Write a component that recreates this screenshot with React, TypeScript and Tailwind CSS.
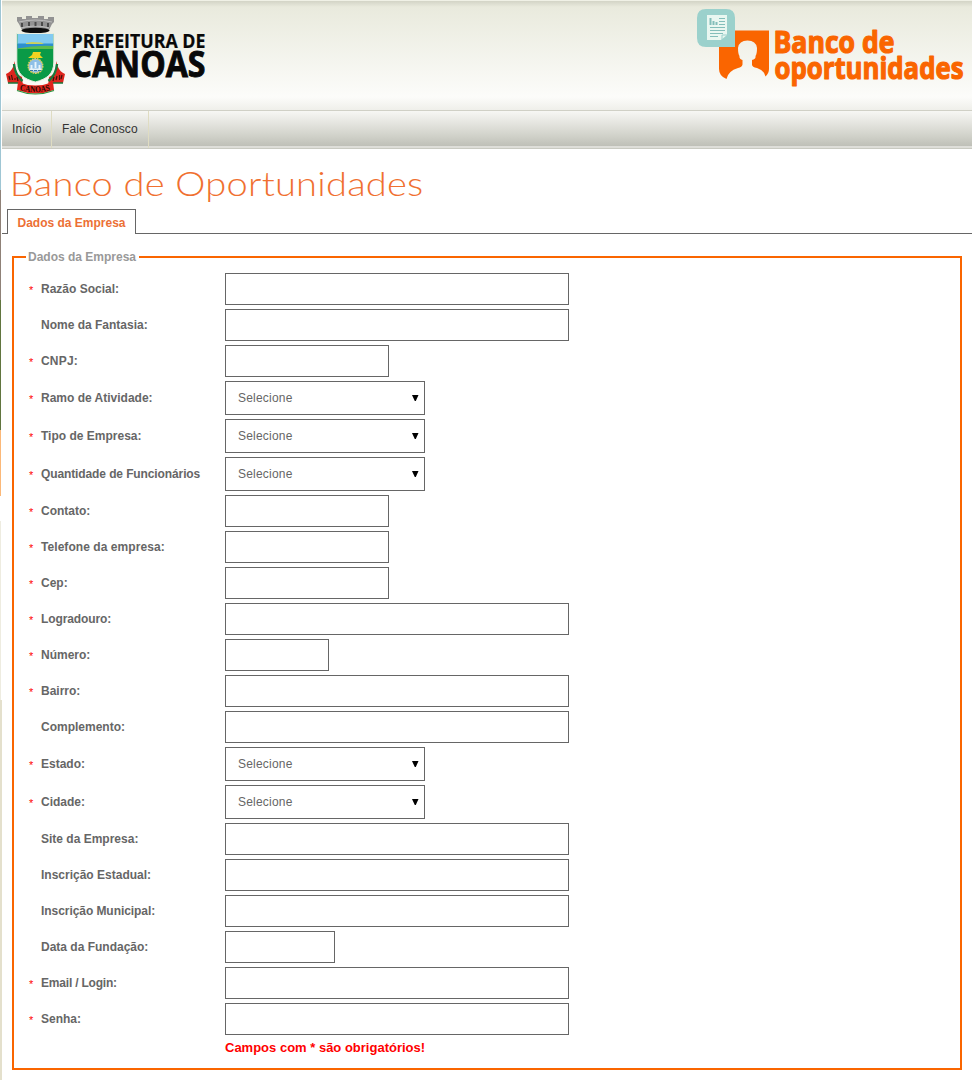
import React from "react";

type Row = {
  label: string;
  required?: boolean;
  kind?: "select";
  width: string;
  tracking?: string;
};

const rows: Row[] = [
  { label: "Razão Social:", required: true, width: "w-[344px]" },
  { label: "Nome da Fantasia:", width: "w-[344px]" },
  { label: "CNPJ:", required: true, width: "w-[164px]", tracking: "tracking-[0.2px]" },
  { label: "Ramo de Atividade:", required: true, kind: "select", width: "w-[200px]" },
  { label: "Tipo de Empresa:", required: true, kind: "select", width: "w-[200px]" },
  { label: "Quantidade de Funcionários", required: true, kind: "select", width: "w-[200px]", tracking: "tracking-[-0.11px]" },
  { label: "Contato:", required: true, width: "w-[164px]" },
  { label: "Telefone da empresa:", required: true, width: "w-[164px]", tracking: "tracking-[0.06px]" },
  { label: "Cep:", required: true, width: "w-[164px]" },
  { label: "Logradouro:", required: true, width: "w-[344px]", tracking: "tracking-[-0.1px]" },
  { label: "Número:", required: true, width: "w-[104px]" },
  { label: "Bairro:", required: true, width: "w-[344px]" },
  { label: "Complemento:", width: "w-[344px]" },
  { label: "Estado:", required: true, kind: "select", width: "w-[200px]" },
  { label: "Cidade:", required: true, kind: "select", width: "w-[200px]" },
  { label: "Site da Empresa:", width: "w-[344px]" },
  { label: "Inscrição Estadual:", width: "w-[344px]" },
  { label: "Inscrição Municipal:", width: "w-[344px]", tracking: "tracking-[-0.06px]" },
  { label: "Data da Fundação:", width: "w-[110px]" },
  { label: "Email / Login:", required: true, width: "w-[344px]", tracking: "tracking-[-0.2px]" },
  { label: "Senha:", required: true, width: "w-[344px]" },
];

function Crest() {
  return (
    <svg width="66" height="86" viewBox="2 12 66 86" className="block shrink-0">
      <path d="M17 17h5v2h4v-3h6v2h6v-2h6v3h4v-2h6v5l-2 2-3 6q-13-4-27 0l-3-6-2-3z" fill="#929292" />
      <path d="M19 22q16-4 33 0M21 28q14-4 28 0" stroke="#bcbcbc" strokeWidth="1" fill="none" />
      <path d="M22 23v4M29 22v4M35.500 22v4M42 22v4M48 23v4" stroke="#4a4a4a" strokeWidth="2" />
      <ellipse cx="35.500" cy="30.500" rx="14" ry="2.800" fill="#0d0d0d" />
      <path d="M15 61l-2 6q-2 5-7 7l2 9 10 0 5 3-1-9-7-4z" fill="#dd261d" />
      <path d="M56 61l2 6q2 5 7 7l-2 9-10 0-5 3 1-9 7-4z" fill="#dd261d" />
      <path d="M14 64q1 11 8.500 17M57 64q-1 11-8.500 17" stroke="#177a3c" strokeWidth="2.400" fill="none" />
      <path d="M8 83l10 0 3 3M63 83l-10 0-3 3" stroke="#177a3c" strokeWidth="1.500" fill="none" />
      <path d="M16.800 33.500h37V62c0 12-7 17-18.500 20C24 79 16.800 74 16.800 62z" fill="#0a9a47" stroke="#e9eee0" strokeWidth="1" />
      <path d="M17.500 34h35.600v10H17.500z" fill="#82caf1" />
      <path d="M17.500 43.500h35.600V46l-17 1-18.600 2z" fill="#2d8fd0" />
      <path d="M17.500 48.500q18-3.500 35.600-2.500v3H17.500z" fill="#5dbb4d" />
      <path d="M26 44v-1l6-1 9 .500 3 1.500z" fill="#cdd15a" />
      <path d="M33 52h8l-1 3 3 3H28l4-3z" fill="#f0d321" />
      <circle cx="35.500" cy="66" r="7.200" fill="#8ebfe7" stroke="#dccf63" strokeWidth="1.600" strokeDasharray="1.800 .7" />
      <path d="M29.500 69.500h12M31.500 65v4M35.500 62v6M39.500 65v4" stroke="#e9f4fa" strokeWidth="1.900" />
      <path d="M30 70.500h3m1 0h3m1 0h3" stroke="#38789c" strokeWidth="1" />
      <path d="M18 82q17 7 35 0l1 8q-18 7-37 0z" fill="#e0241c" />
      <path d="M17 90.500q18 7 37 0" stroke="#2a9440" strokeWidth="1.200" fill="none" />
      <path id="ribbon" d="M19.500 90Q35.500 94.500 52 90" fill="none" />
      <text fontFamily="Liberation Serif, serif" fontSize="8.800" fontWeight="700" fill="#1b0905">
        <textPath href="#ribbon" textLength="31" lengthAdjust="spacingAndGlyphs">CANOAS</textPath>
      </text>
      <path d="M9 76l1 4M11.500 75l1 5M14 79h2M17 77l1 4M54 77l-1 4M57 76l-1 4M59.500 75v5M62 75l-1 4" stroke="#44110b" strokeWidth="1.200" />
    </svg>
  );
}

function CityLogo() {
  return (
    <div className="flex items-start">
      <Crest />
      <svg width="150" height="86" viewBox="68 12 150 86" className="block">
        <g fontFamily="Open Sans, sans-serif" fontWeight="700" fill="#090909" stroke="#090909">
          <text x="71.500" y="47.500" fontSize="20" strokeWidth="0.200" textLength="134" lengthAdjust="spacingAndGlyphs">PREFEITURA DE</text>
          <text x="71.500" y="77" fontSize="35.500" strokeWidth="0.900" textLength="134" lengthAdjust="spacingAndGlyphs">CANOAS</text>
        </g>
      </svg>
    </div>
  );
}

function BankLogo() {
  return (
    <svg width="280" height="94" viewBox="692 4 280 94" className="block">
      <path d="M719 30.500H769V69Q769 73 765.500 76.500Q764 70 757 68Q752 67 752 64.500V60Q756 59 755.500 56Q757 54 757 48Q756 40.500 747.500 40.500Q739 40.500 738 48Q738 54 739.500 56Q739 59 742.500 60V64.500Q742 67 738 68Q728 71 726.500 79Q719 76 719 69Z" fill="#fa6500" />
      <path d="M706 9h20q9 0 9 9v29h-29q-9 0-9-9V18q0-9 9-9z" fill="#9bd1cc" />
      <path d="M707 15h20v20l-6 5h-14z" fill="#e9f7f1" />
      <path d="M727 35h-5v5" fill="none" stroke="#9bd1cc" />
      <path d="M710.500 18v7M713.500 21v4M716.500 22v3" stroke="#83beba" strokeWidth="2" />
      <path d="M719 18.500h6M719 21.500h6M719 24.500h6M710 27.500h15M710 30.500h15M710 33.500h13M710 36.500h8" stroke="#83beba" strokeWidth="1" fill="none" />
      <g fontFamily="Open Sans, sans-serif" fontWeight="700" fill="#fa6500" stroke="#fa6500" strokeWidth="1.200" strokeLinejoin="round">
        <text x="773.500" y="53" fontSize="30.500" textLength="121" lengthAdjust="spacingAndGlyphs">Banco de</text>
        <text x="774.500" y="79" fontSize="30.500" textLength="189" lengthAdjust="spacingAndGlyphs">oportunidades</text>
      </g>
    </svg>
  );
}

function Field({ row }: { row: Row }) {
  return (
    <div className="flex items-center">
      <span className="w-[13px] shrink-0 pl-px pt-[2px] text-[11px] leading-4 text-[#ff0000]">{row.required ? "*" : ""}</span>
      <label className={`w-[184px] shrink-0 whitespace-nowrap pb-px text-xs font-bold leading-4 text-[#666] ${row.tracking ?? ""}`}>{row.label}</label>
      {row.kind === "select" ? (
        <div className={`flex h-[34px] items-center justify-between border border-[#666] bg-white pl-3 pr-[5px] text-xs text-[#666] ${row.width}`}>
          <span className="tracking-[0.2px]">Selecione</span>
          <svg width="8" height="8" className="block"><path d="M1 1h6.500L4.800 7h-1z" fill="#000" /></svg>
        </div>
      ) : (
        <input aria-label={row.label} className={`h-8 border border-[#666] bg-white px-3 text-xs outline-none ${row.width}`} />
      )}
    </div>
  );
}

export default function App() {
  return (
    <div className="flex h-[1080px] w-[972px] overflow-hidden bg-white font-['Liberation_Sans',Arial,sans-serif]">
      <div className="flex w-[2px] shrink-0 flex-col">
        <div className="h-[190px] w-px bg-[#9fc6d4]" />
        <div className="h-[110px] w-px bg-[#8f8177]" />
        <div className="h-[130px] w-px bg-[#61753f]" />
        <div className="h-[66px] w-px bg-[#fbb878]" />
        <div className="h-[25px]" />
        <div className="h-[179px] w-px bg-[#eeece0]" />
        <div className="grow bg-[#e4e0cc]" />
      </div>
      <div className="flex min-w-0 grow flex-col">
        <header className="flex h-[110px] shrink-0 items-start justify-between border-t border-[#f0f1e6] bg-[linear-gradient(#d3d4c6_0px,#e9eadd_6px,#fcfcfa_96px,#efefea_109px)]">
          <div className="pt-[11px]"><CityLogo /></div>
          <div className="pt-[3px]"><BankLogo /></div>
        </header>
        <nav className="flex h-[39px] shrink-0 border-b border-t border-b-[#c9cac2] border-t-[#d0d0c6] bg-[linear-gradient(#f7f7f4,#d2d3cb_65%,#bfc0b8_94%,#deded9_95%)] text-xs tracking-[0.15px] text-[#333]">
          <a className="flex w-[50px] items-center border-r border-[#dfdcc2] pb-px pl-[10px]">Início</a>
          <a className="flex w-[97px] items-center border-r border-[#dfdcc2] pb-px pl-[10px]">Fale Conosco</a>
        </nav>
        <h1 className="h-[60px] shrink-0 origin-left scale-x-[1.12] whitespace-nowrap pl-[7px] pt-[11px] font-[Lato] text-[34px] font-light leading-[46px] tracking-[0.2px] text-[#f07030]">Banco de Oportunidades</h1>
        <div className="flex h-[25px] shrink-0">
          <div className="w-[5px] border-b border-[#666]" />
          <div className="flex w-[129px] items-center justify-center border-x border-t border-[#666] pt-[2px] text-xs font-bold text-[#ec7035]">Dados da Empresa</div>
          <div className="grow border-b border-[#666]" />
        </div>
        <main className="px-[10px] pt-[15px]">
          <fieldset className="h-[821px] border-2 border-[#fa6500] pl-[14px]">
            <legend className="-ml-[2px] h-4 w-[113px] whitespace-nowrap px-[2px] text-xs font-bold leading-4 text-[#999]">Dados da Empresa</legend>
            <div className="flex flex-col gap-1 pt-2">
              {rows.map((row) => <Field key={row.label} row={row} />)}
            </div>
            <p className="pl-[197px] pt-[5px] text-[13px] font-bold leading-4 text-[#ff0000]">Campos com * são obrigatórios!</p>
          </fieldset>
        </main>
      </div>
    </div>
  );
}
